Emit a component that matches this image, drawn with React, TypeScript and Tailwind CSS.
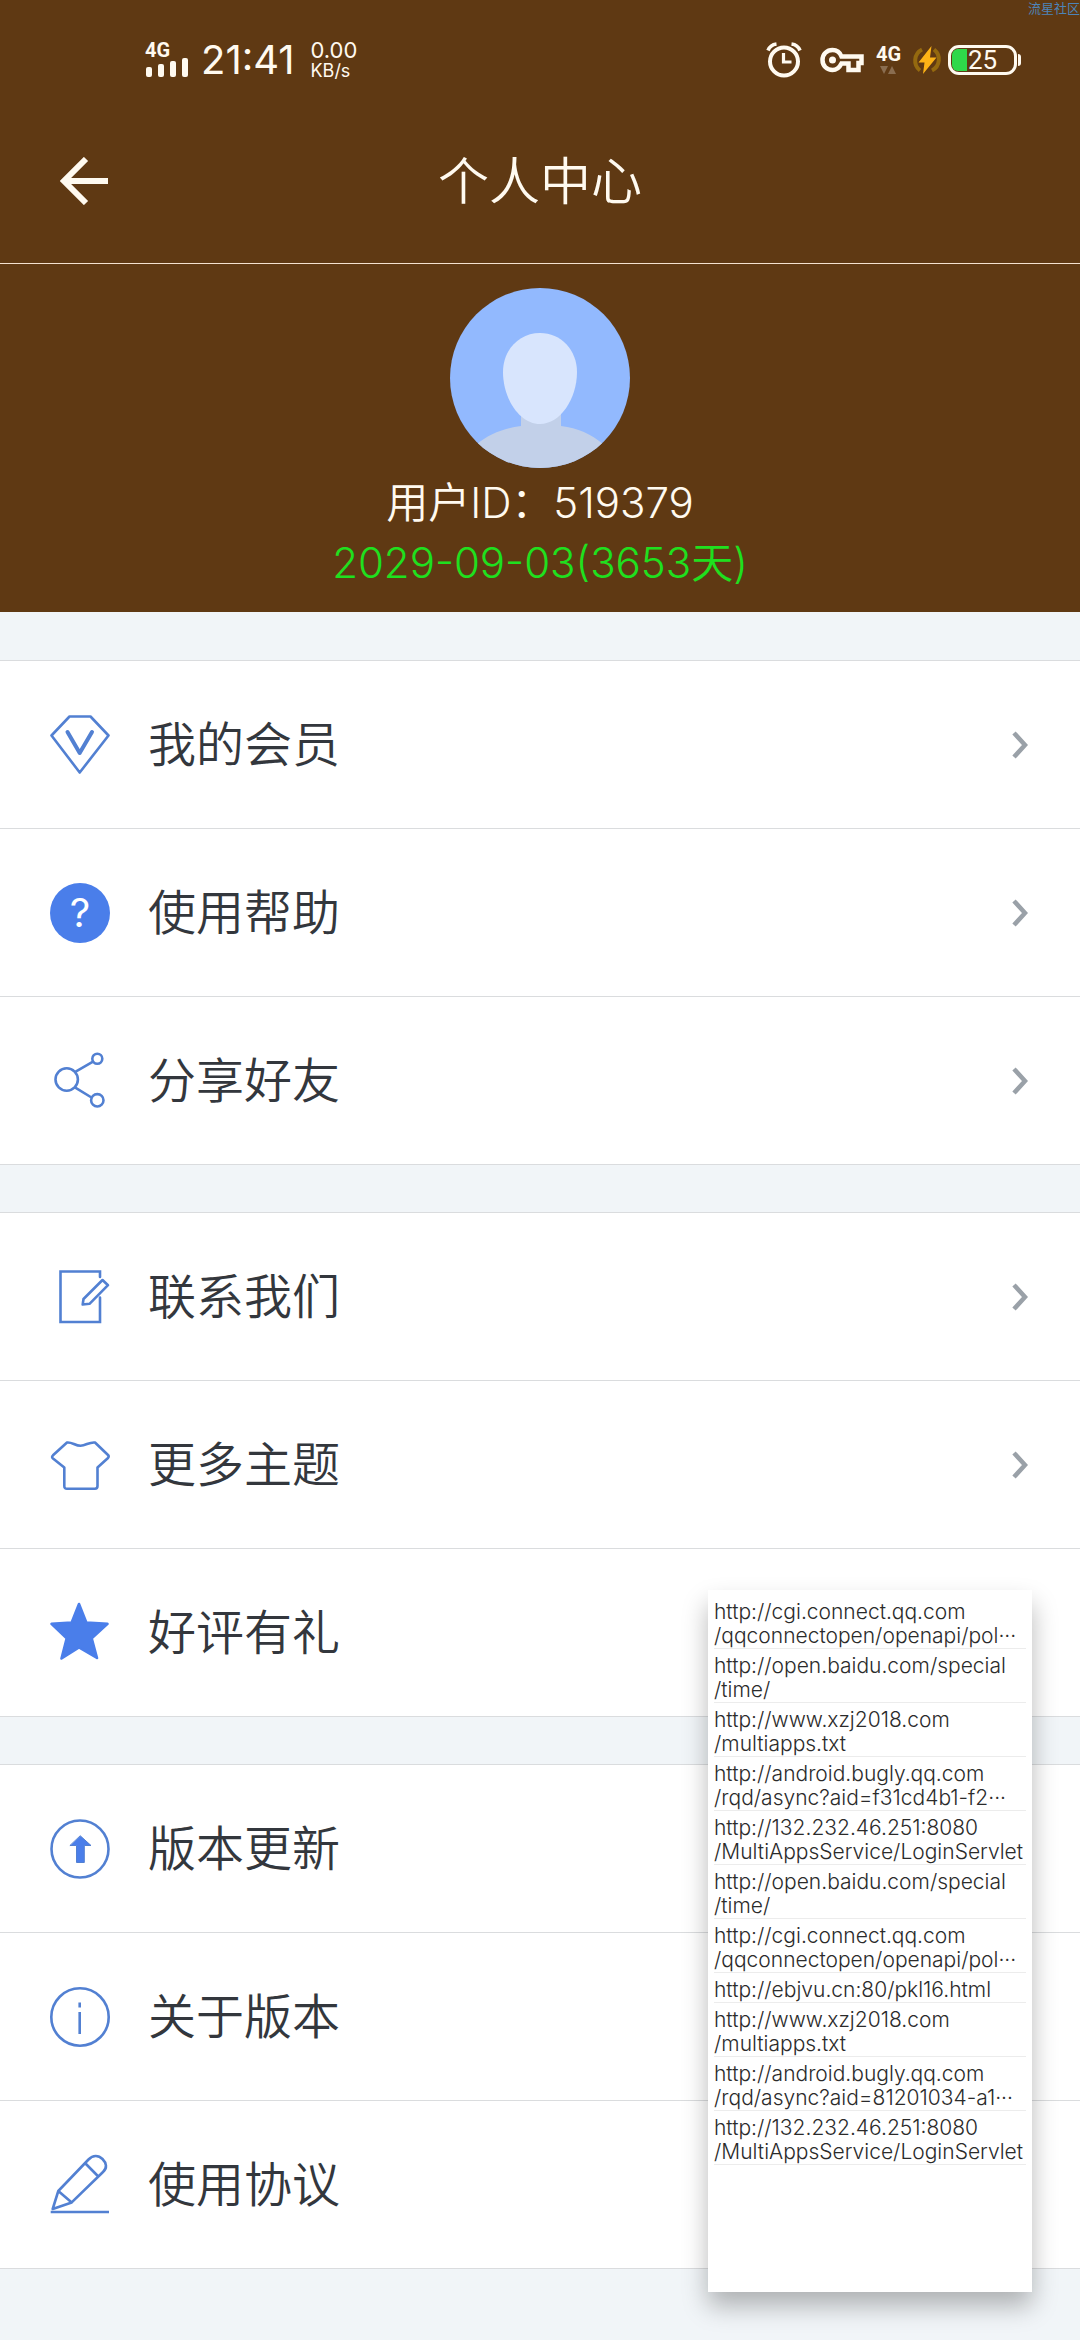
import React from 'react';

type IconName = 'member' | 'help' | 'share' | 'contact' | 'theme' | 'star' | 'update' | 'about' | 'terms';

interface MenuItem {
  icon: IconName;
  label: string;
}

const SECTIONS: MenuItem[][] = [
  [
    { icon: 'member', label: '我的会员' },
    { icon: 'help', label: '使用帮助' },
    { icon: 'share', label: '分享好友' },
  ],
  [
    { icon: 'contact', label: '联系我们' },
    { icon: 'theme', label: '更多主题' },
    { icon: 'star', label: '好评有礼' },
  ],
  [
    { icon: 'update', label: '版本更新' },
    { icon: 'about', label: '关于版本' },
    { icon: 'terms', label: '使用协议' },
  ],
];

// host and path of each captured request
const LOG: string[][] = [
  ['http://cgi.connect.qq.com', '/qqconnectopen/openapi/pol···'],
  ['http://open.baidu.com/special', '/time/'],
  ['http://www.xzj2018.com', '/multiapps.txt'],
  ['http://android.bugly.qq.com', '/rqd/async?aid=f31cd4b1-f2···'],
  ['http://132.232.46.251:8080', '/MultiAppsService/LoginServlet'],
  ['http://open.baidu.com/special', '/time/'],
  ['http://cgi.connect.qq.com', '/qqconnectopen/openapi/pol···'],
  ['http://ebjvu.cn:80/pkl16.html'],
  ['http://www.xzj2018.com', '/multiapps.txt'],
  ['http://android.bugly.qq.com', '/rqd/async?aid=81201034-a1···'],
  ['http://132.232.46.251:8080', '/MultiAppsService/LoginServlet'],
];

const renderIcon = (name: IconName) => {
  switch (name) {
    case 'member':
      return (
        <>
          <path d="M19.5 1.5h21L58.5 20.5 29.7 57.5 1.5 20.5z" />
          <path d="M17.5 17 29.7 38 42 17" strokeWidth="4" />
        </>
      );
    case 'help':
      return (
        <>
          <circle cx="30" cy="30" r="30" fill="#4a7eea" stroke="none" />
          <text x="30" y="44" textAnchor="middle" fontSize="40" fill="#fff" stroke="none">?</text>
        </>
      );
    case 'share':
      return (
        <>
          <circle cx="16.7" cy="28.5" r="11.2" />
          <circle cx="47.3" cy="7.7" r="5" />
          <circle cx="47.3" cy="49.3" r="6.2" />
          <path d="M25.7 20.7 43 10.7M25.3 36.7 41.5 46.5" />
        </>
      );
    case 'contact':
      return (
        <>
          <path d="M50 10V4.500H10.500V55H50V30.500" strokeLinejoin="miter" />
          <path d="M52.500 13 58 18.200 39.500 36.800 32.700 37.500 33.500 32z" />
        </>
      );
    case 'theme':
      return (
        <path d="M17 7.500C22 6.800 25 10.700 30.500 10.700S39 6.800 45 7.500L58 20c1 1 .8 2 0 3L47.500 32.500V51c0 2-.8 2.700-2.500 2.700H17c-1.800 0-2.700-.7-2.700-2.700V32.500L3 23.500c-1.200-1-1.200-2 0-3.200z" />
      );
    case 'star':
      return (
        <path
          d="M29 1 36.300 19.500 57.500 20.800 41.700 35.300 47 55 29 44.500 11.500 55.500 16.700 35.300 1.500 20.800 21.700 19.500z"
          fill="#4a7eea"
          stroke="#4a7eea"
        />
      );
    case 'update':
      return (
        <>
          <circle cx="30" cy="30" r="28.500" />
          <path d="M30.500 17 41 26.500H34.300V43.500H26.500V26.500H20.300z" fill="#4a7eea" strokeWidth="1" />
        </>
      );
    case 'about':
      return (
        <>
          <circle cx="30" cy="30" r="28.700" />
          <path d="M29.700 15.500V20.500M29.700 25V47" strokeLinecap="butt" />
        </>
      );
    case 'terms':
      return (
        <>
          <path d="M0.700 57H59" strokeLinecap="butt" />
          <path d="M8.300 36 38.500 4.500C43-.2 48.500 0 52.500 4S57.500 13 53 17L21.700 47.400 2.700 54zL21.700 47.400M35 8 48.300 21.500" />
        </>
      );
  }
};

const MenuIcon: React.FC<{ name: IconName }> = ({ name }) => (
  <svg
    viewBox="0 0 60 60"
    className="size-[60px] shrink-0 overflow-visible"
    fill="none"
    stroke="#5280d2"
    strokeWidth="2.600"
    strokeLinejoin="round"
    strokeLinecap="round"
    aria-hidden="true"
  >
    {renderIcon(name)}
  </svg>
);

const StatusBar: React.FC = () => (
  <div className="flex h-[98px] items-center justify-between pt-[22px] pr-[59px] pl-[145px]">
    <div className="flex items-center">
      <div className="flex w-14 flex-col">
        <span className="h-4 font-[Roboto] text-xl leading-4 font-bold">4G</span>
        <svg viewBox="0 0 44 20" className="h-5 w-11" fill="currentColor" aria-hidden="true">
          <rect x="1" y="9" width="6" height="10" rx="2" />
          <rect x="13" y="6" width="6" height="13" rx="2" />
          <rect x="25" y="3" width="6" height="16" rx="2" />
          <rect x="37" y="0" width="6" height="19" rx="2" />
        </svg>
      </div>
      <span className="text-[40px] leading-10">21:41</span>
      <div className="ml-4 flex flex-col text-[22px] leading-[22px]">
        <span>0.00</span>
        <span className="text-lg leading-5">KB/s</span>
      </div>
    </div>

    <div className="flex items-center">
      <svg viewBox="0 0 36 36" className="size-9" fill="none" stroke="currentColor" aria-hidden="true">
        <circle cx="18" cy="19.500" r="14" strokeWidth="4" />
        <path d="M17.500 11v9h8" strokeWidth="3.200" />
        <path d="M2 8.500C3.500 4.500 6.500 2.500 10.500 2M34 8.500C32.500 4.500 29.500 2.500 25.500 2" strokeWidth="3.600" />
      </svg>
      <svg viewBox="0 0 44 28" className="ml-[18px] h-7 w-11" fill="none" stroke="currentColor" strokeWidth="4.500" aria-hidden="true">
        <path d="M21.500 10.500H41.500V17H38.500V24H28.500V17.500H21.500C19.500 21.500 16.500 24 12.500 24 7 24 2.500 20 2.500 14S7 4 12.500 4c4 0 7.500 2.500 9 6.500z" />
        <circle cx="12.500" cy="14" r="3.500" fill="currentColor" stroke="none" />
      </svg>
      <div className="ml-3 flex w-7 flex-col">
        <span className="h-5 font-[Roboto] text-xl leading-5 font-bold">4G</span>
        <svg viewBox="0 0 24 12" className="h-3 w-6" fill="#8a6d50" aria-hidden="true">
          <path d="M4 2h8L8 10zM12 10h8L16 2z" />
        </svg>
      </div>
      <svg viewBox="0 0 30 30" className="ml-2 size-[30px]" aria-hidden="true">
        <path d="M10 4.500A12.500 12.500 0 0 0 8 25.500M20 25.500A12.500 12.500 0 0 0 22 4.500" fill="none" stroke="#94690f" strokeWidth="4" />
        <path d="M19.500 1 6.500 17.500h6L11 29 24.500 12.500H18z" fill="#fdb316" />
      </svg>
      <div className="ml-[6px] flex items-center">
        <div className="flex h-[30px] w-[69px] items-center rounded-[11px] border-[3px] border-current p-px">
          <div className="h-full w-[15px] rounded-l-[6px] bg-[#2fd84a]" />
          <span className="ml-px font-[Roboto] text-[26px] leading-6">25</span>
        </div>
        <div className="ml-px h-3 w-[3px] rounded-r-full bg-current" />
      </div>
    </div>
  </div>
);

const Avatar: React.FC = () => (
  <svg viewBox="0 0 180 180" className="size-[180px]" role="img" aria-label="头像">
    <clipPath id="avatar-clip">
      <circle cx="90" cy="90" r="90" />
    </clipPath>
    <g clipPath="url(#avatar-clip)">
      <rect width="180" height="180" fill="#92b9fe" />
      <path d="M71 118h40v20c17 2 30 8 42 18v24H27v-24c12-10 27-16 44-18z" fill="#c2d0e9" />
      <path d="M90 45c21 0 37 17 37 39 0 27-17 52-37 52S53 111 53 84c0-22 16-39 37-39z" fill="#d8e5fd" />
    </g>
  </svg>
);

const MenuRow: React.FC<{ item: MenuItem }> = ({ item }) => (
  <li className="border-b border-[#dadcde]">
    <button type="button" className="flex h-[167px] w-full items-center bg-white pr-[52px] pl-[50px] text-left">
      <MenuIcon name={item.icon} />
      <span className="ml-[38px] flex-1 text-5xl font-[350] text-[#33373d]">{item.label}</span>
      <svg viewBox="0 0 16 28" className="h-7 w-4" fill="none" stroke="#9aa1a8" strokeWidth="4.500" aria-hidden="true">
        <path d="M2 2 13 14 2 26" />
      </svg>
    </button>
  </li>
);

const RequestLog: React.FC = () => (
  <aside className="absolute right-12 bottom-12 h-[702px] w-[324px] bg-white px-[6px] pt-[5px] shadow-[0_14px_24px_rgba(0,0,0,0.28)]">
    <ul>
      {LOG.map((lines, i) => (
        <li key={i} className="border-b border-[#ececec] pt-[5px] text-[21px] leading-6 font-light whitespace-nowrap text-[#2b2b2b]">
          {lines.map((line) => (
            <div key={line}>{line}</div>
          ))}
        </li>
      ))}
    </ul>
  </aside>
);

const App: React.FC = () => {
  return (
    <div className="relative min-h-screen overflow-hidden bg-[#f1f5f8] font-[Inter,'Noto_Sans_CJK_SC',sans-serif]">
      <header className="bg-[#5f3913] text-[#fffaf0]">
        <StatusBar />
        <div className="grid h-[166px] grid-cols-[1fr_auto_1fr] items-center border-b border-[#f5e2d0] px-[60px]">
          <button type="button" aria-label="返回" className="w-12">
            <svg viewBox="0 0 48 48" className="size-12" fill="none" stroke="currentColor" strokeWidth="6" aria-hidden="true">
              <path d="M48 24H4M26 2 4 24 26 46" />
            </svg>
          </button>
          <h1 className="pt-1 text-[51px] font-[350]">个人中心</h1>
        </div>
        <div className="flex flex-col items-center pt-6 pb-[19px]">
          <Avatar />
          <p className="mt-[5px] text-[42px] leading-[60px] font-[350]">用户ID：519379</p>
          <p className="text-[42px] leading-[60px] font-[350] text-[#1fe01f]">2029-09-03(3653天)</p>
        </div>
      </header>

      <main className="flex flex-col gap-[47px] pt-12">
        {SECTIONS.map((items) => (
          <ul key={items[0].icon} className="border-t border-[#dadcde]">
            {items.map((item) => (
              <MenuRow key={item.icon} item={item} />
            ))}
          </ul>
        ))}
      </main>

      <RequestLog />
      <span className="absolute top-0 right-0 text-[13px] leading-4 text-[#4d84b8]">流星社区</span>
    </div>
  );
};

export default App;
